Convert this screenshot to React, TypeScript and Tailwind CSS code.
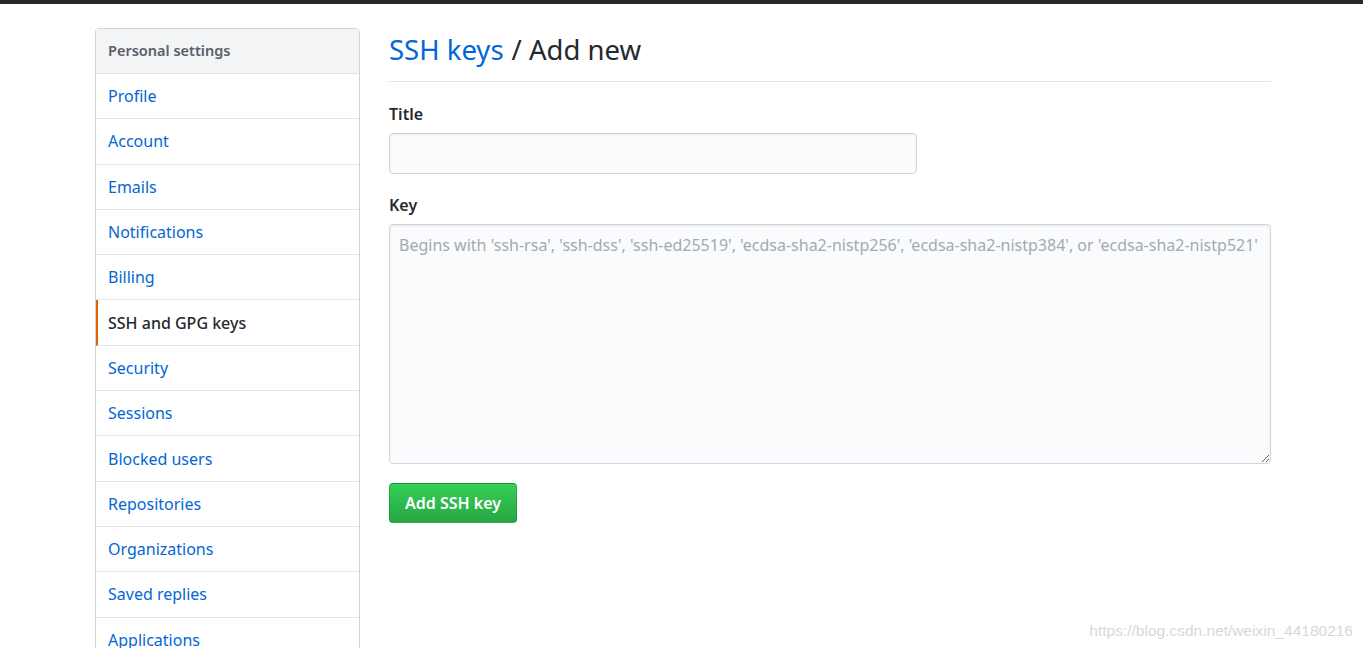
import React from "react";

const items = [
  "Profile",
  "Account",
  "Emails",
  "Notifications",
  "Billing",
  "SSH and GPG keys",
  "Security",
  "Sessions",
  "Blocked users",
  "Repositories",
  "Organizations",
  "Saved replies",
  "Applications",
];

export default function App() {
  return (
    <div
      className="relative h-[648px] w-full overflow-hidden bg-white text-[#24292e]"
      style={{ fontFamily: '"Noto Sans", "Open Sans", sans-serif' }}
    >
      <div className="h-[4px] w-full bg-[#24292e]" />
      <div className="flex pl-[95px] pt-[24px]">
        <nav className="w-[265px] shrink-0 rounded-t-[4px] border border-[#d1d5da]">
          <div className="flex h-[45px] items-center border-b border-[#e1e4e8] bg-[#f3f4f6] px-[12px] text-[14.5px] font-semibold text-[#586069]">
            Personal settings
          </div>
          {items.map((it) => {
            const sel = it === "SSH and GPG keys";
            return (
              <div
                key={it}
                className={
                  sel
                    ? "flex h-[45.3px] items-center border-b border-l-2 border-[#e1e4e8] border-l-[#e36209] pl-[10px] text-[16px] font-medium text-[#24292e]"
                    : "flex h-[45.3px] items-center border-b border-[#e1e4e8] pl-[12px] text-[16px] text-[#0366d6]"
                }
              >
                {it}
              </div>
            );
          })}
        </nav>
        <main className="ml-[29px] w-[882px]">
          <div className="flex h-[54px] items-center border-b border-[#e1e4e8] pb-[10px] text-[27.5px] font-normal leading-none">
            <span className="text-[#0366d6]">SSH keys</span>
            <span className="ml-[8px]">/ Add new</span>
          </div>
          <div className="mt-[22px] text-[16px] font-semibold leading-[20px]">Title</div>
          <div className="mt-[9px] h-[41px] w-[528px] rounded-[4px] border border-[#d1d5da] bg-[#fafbfc] shadow-[inset_0_1px_2px_rgba(27,31,35,0.075)]" />
          <div className="mt-[21px] text-[16px] font-semibold leading-[20px]">Key</div>
          <textarea
            className="mt-[9px] block h-[240px] w-[882px] resize-y rounded-[4px] border border-[#d1d5da] bg-[#fafbfc] px-[9px] py-[8px] text-[16px] leading-[24px] shadow-[inset_0_1px_2px_rgba(27,31,35,0.075)] outline-none placeholder:text-[#a3aab1]"
            placeholder="Begins with 'ssh-rsa', 'ssh-dss', 'ssh-ed25519', 'ecdsa-sha2-nistp256', 'ecdsa-sha2-nistp384', or 'ecdsa-sha2-nistp521'"
          />
          <button className="mt-[19px] h-[40px] w-[128px] rounded-[4px] border border-[rgba(27,31,35,0.2)] bg-gradient-to-b from-[#34d058] to-[#28a745] text-[16px] font-semibold text-white">
            Add SSH key
          </button>
        </main>
      </div>
      <div
        className="absolute bottom-[6px] right-[10px] text-[15.5px] text-[#d8d8d8]"
        style={{ fontFamily: '"Liberation Sans", Arial, sans-serif' }}
      >
        https://blog.csdn.net/weixin_44180216
      </div>
    </div>
  );
}
